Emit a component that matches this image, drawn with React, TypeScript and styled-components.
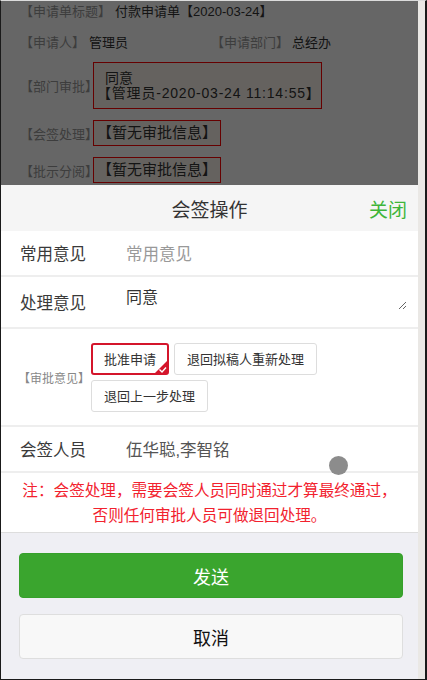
import styled, { createGlobalStyle } from "styled-components";

const GlobalStyle = createGlobalStyle`
  html, body {
    margin: 0;
    padding: 0;
    background: #fff;
  }
  body {
    font-family: "Liberation Sans", "Noto Sans CJK SC", sans-serif;
  }
  * {
    box-sizing: border-box;
  }
`;

const Frame = styled.div`
  width: 427px;
  height: 680px;
  display: flex;
  border-top: 1px solid #dcdcdc;
  border-left: 1px solid #1a1a1a;
  border-right: 2px solid #1a1a1a;
  border-bottom: 1px solid #1a1a1a;
`;

const Page = styled.div`
  position: relative;
  flex: 1;
  overflow: hidden;
  background: #fff;
`;

const Scrollbar = styled.div`
  width: 7px;
  background: #eae8e5;
`;

const Form = styled.div`
  display: flex;
  flex-direction: column;
  gap: 11px;
  margin-top: -1px;
  padding: 0 0 0 19px;
  font-size: 13px;
  color: #333;
`;

const FormRow = styled.div`
  display: flex;
  align-items: center;
  min-height: 20px;
`;

const FormLabel = styled.span<{ $w?: number }>`
  color: #999;
  width: ${(p) => p.$w ?? 73}px;
  flex-shrink: 0;
`;

const FormValue = styled.span<{ $wide?: boolean }>`
  width: ${(p) => (p.$wide ? "122px" : "auto")};
`;

const Record = styled.div`
  border: 1px solid #f00;
  background: #fdf6ee;
  color: #333;
  font-size: 15px;
  line-height: 24px;
  padding: 0 3px;
  white-space: nowrap;
`;

const Opinion = styled(Record)`
  width: 229px;
  font-size: 14px;
  line-height: 15px;
  padding: 8px 3px 7px 3px;

  div:first-child {
    padding-left: 8px;
  }
  div:last-child {
    letter-spacing: 0.8px;
  }
`;

const Mask = styled.div`
  position: absolute;
  inset: 0;
  background: rgba(0, 0, 0, 0.6);
`;

const Sheet = styled.div`
  position: absolute;
  left: 0;
  right: 0;
  bottom: 0;
  display: flex;
  flex-direction: column;
  background: #efeff4;
`;

const SheetHeader = styled.div`
  height: 46px;
  display: grid;
  grid-template-columns: 1fr auto 1fr;
  align-items: center;
  background: #f5f5f5;
  font-size: 19px;
`;

const SheetTitle = styled.div`
  grid-column: 2;
  color: #333;
`;

const CloseLink = styled.div`
  justify-self: end;
  padding-right: 11px;
  color: #3fb53a;
`;

const Row = styled.div<{ $h: number; $first?: boolean }>`
  display: flex;
  align-items: center;
  height: ${(p) => p.$h}px;
  background: #fff;
  border-top: ${(p) => (p.$first ? "none" : "2px solid #eeeeee")};
  padding-left: 19px;
  font-size: 16.5px;
`;

const RowLabel = styled.div`
  width: 106px;
  flex-shrink: 0;
  color: #3a3a3a;
`;

const RowValue = styled.div<{ $muted?: boolean }>`
  color: ${(p) => (p.$muted ? "#999" : "#555")};
`;

const Remark = styled.textarea`
  align-self: flex-start;
  margin-top: 7px;
  width: 281px;
  height: 26px;
  padding: 0;
  border: none;
  outline: none;
  resize: both;
  font: inherit;
  font-size: 16px;
  color: #333;
  background: transparent;
`;

const SmallLabel = styled.div`
  width: 73px;
  flex-shrink: 0;
  margin-left: -2px;
  font-size: 12px;
  color: #888;
`;

const ChoiceGroup = styled.div`
  display: flex;
  flex-wrap: wrap;
  gap: 5px;
  width: 240px;
`;

const Choice = styled.div<{ $active?: boolean }>`
  position: relative;
  height: 32px;
  display: flex;
  align-items: center;
  padding: 0 ${(p) => (p.$active ? 11 : 12)}px;
  border: ${(p) => (p.$active ? "2px solid #d4152b" : "1px solid #dddddd")};
  border-radius: 3px;
  font-size: 13px;
  color: #333;
  background: #fff;
`;

const Tick = styled.svg`
  position: absolute;
  right: -1px;
  bottom: -1px;
`;

const Note = styled.div`
  height: 62px;
  display: flex;
  flex-direction: column;
  justify-content: center;
  background: #fff;
  border-top: 2px solid #eeeeee;
  border-bottom: 1px solid #dddddd;
  text-align: center;
  color: #f2222e;
  font-size: 15.6px;
  line-height: 25px;
`;

const Actions = styled.div`
  display: flex;
  flex-direction: column;
  gap: 16px;
  padding: 20px 15px 20px 18px;
`;

const Button = styled.div<{ $primary?: boolean }>`
  height: 45px;
  display: flex;
  align-items: center;
  justify-content: center;
  border-radius: 4px;
  font-size: 18px;
  color: ${(p) => (p.$primary ? "#fff" : "#111")};
  background: ${(p) => (p.$primary ? "#3aa52e" : "#f8f8f8")};
  border: 1px solid ${(p) => (p.$primary ? "#36a02b" : "#dedede")};
`;

const TouchDot = styled.div`
  position: absolute;
  left: 328px;
  top: 455px;
  width: 19px;
  height: 19px;
  border-radius: 50%;
  background: #8c8c8c;
`;

export default function App() {
  return (
    <>
      <GlobalStyle />
      <Frame>
        <Page>
          <Form>
            <FormRow>
              <FormLabel $w={95}>【申请单标题】</FormLabel>
              <FormValue>付款申请单【2020-03-24】</FormValue>
            </FormRow>
            <FormRow>
              <FormLabel $w={69}>【申请人】</FormLabel>
              <FormValue $wide>管理员</FormValue>
              <FormLabel $w={81}>【申请部门】</FormLabel>
              <FormValue>总经办</FormValue>
            </FormRow>
            <FormRow>
              <FormLabel>【部门审批】</FormLabel>
              <Opinion>
                <div>同意</div>
                <div>【管理员-2020-03-24 11:14:55】</div>
              </Opinion>
            </FormRow>
            <FormRow>
              <FormLabel>【会签处理】</FormLabel>
              <Record>【暂无审批信息】</Record>
            </FormRow>
            <FormRow>
              <FormLabel>【批示分阅】</FormLabel>
              <Record>【暂无审批信息】</Record>
            </FormRow>
          </Form>
          <Mask />
          <Sheet>
            <SheetHeader>
              <SheetTitle>会签操作</SheetTitle>
              <CloseLink>关闭</CloseLink>
            </SheetHeader>
            <Row $h={44} $first>
              <RowLabel>常用意见</RowLabel>
              <RowValue $muted>常用意见</RowValue>
            </Row>
            <Row $h={52}>
              <RowLabel>处理意见</RowLabel>
              <Remark defaultValue="同意" />
            </Row>
            <Row $h={98}>
              <SmallLabel>【审批意见】</SmallLabel>
              <ChoiceGroup>
                <Choice $active>
                  批准申请
                  <Tick width="14" height="14" viewBox="0 0 14 14">
                    <polygon points="14,0 14,14 0,14" fill="#d4152b" />
                    <polyline
                      points="5.5,9.5 8,12 12,7.5"
                      fill="none"
                      stroke="#fff"
                      strokeWidth="1.4"
                    />
                  </Tick>
                </Choice>
                <Choice>退回拟稿人重新处理</Choice>
                <Choice>退回上一步处理</Choice>
              </ChoiceGroup>
            </Row>
            <Row $h={46}>
              <RowLabel>会签人员</RowLabel>
              <RowValue>伍华聪,李智铭</RowValue>
            </Row>
            <Note>
              <div>注：会签处理，需要会签人员同时通过才算最终通过，</div>
              <div>否则任何审批人员可做退回处理。</div>
            </Note>
            <Actions>
              <Button $primary>发送</Button>
              <Button>取消</Button>
            </Actions>
          </Sheet>
          <TouchDot />
        </Page>
        <Scrollbar />
      </Frame>
    </>
  );
}
